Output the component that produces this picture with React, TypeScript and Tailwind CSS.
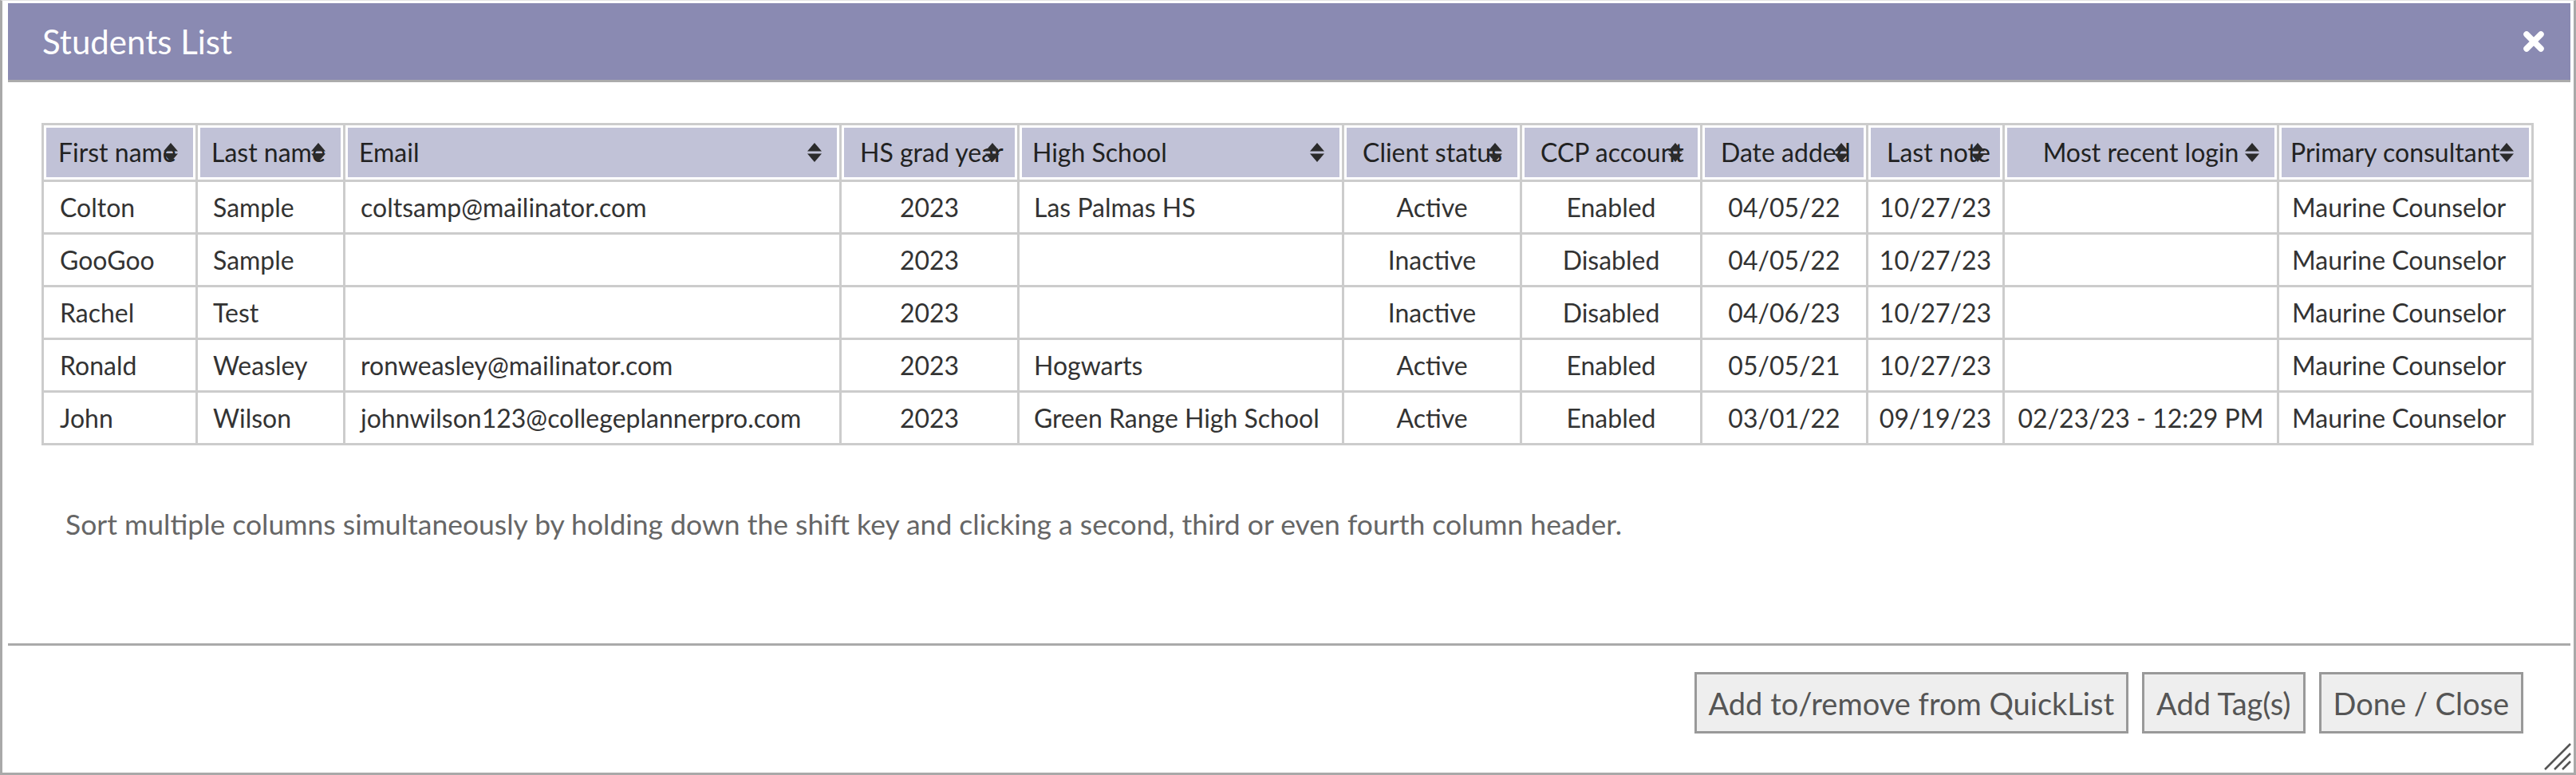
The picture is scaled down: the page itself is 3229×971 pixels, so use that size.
import React from "react";

type Col = { label: string; w: number; center: boolean; pl: number };

const cols: Col[] = [
  { label: "First name", w: 193, center: false, pl: 18 },
  { label: "Last name", w: 185, center: false, pl: 17 },
  { label: "Email", w: 622, center: false, pl: 17 },
  { label: "HS grad year", w: 223, center: true, pl: 0 },
  { label: "High School", w: 407, center: false, pl: 16 },
  { label: "Client status", w: 223, center: true, pl: 0 },
  { label: "CCP account", w: 226, center: true, pl: 0 },
  { label: "Date added", w: 208, center: true, pl: 0 },
  { label: "Last note", w: 171, center: true, pl: 0 },
  { label: "Most recent login", w: 344, center: true, pl: 0 },
  { label: "Primary consultant", w: 319, center: false, pl: 14 },
];

const rows: string[][] = [
  ["Colton", "Sample", "coltsamp@mailinator.com", "2023", "Las Palmas HS", "Active", "Enabled", "04/05/22", "10/27/23", "", "Maurine Counselor"],
  ["GooGoo", "Sample", "", "2023", "", "Inactive", "Disabled", "04/05/22", "10/27/23", "", "Maurine Counselor"],
  ["Rachel", "Test", "", "2023", "", "Inactive", "Disabled", "04/06/23", "10/27/23", "", "Maurine Counselor"],
  ["Ronald", "Weasley", "ronweasley@mailinator.com", "2023", "Hogwarts", "Active", "Enabled", "05/05/21", "10/27/23", "", "Maurine Counselor"],
  ["John", "Wilson", "johnwilson123@collegeplannerpro.com", "2023", "Green Range High School", "Active", "Enabled", "03/01/22", "09/19/23", "02/23/23 - 12:29 PM", "Maurine Counselor"],
];

function SortIcon() {
  return (
    <svg width="20" height="26" viewBox="0 0 20 26" className="block">
      <path d="M10 1 L19 11.5 L1 11.5 Z" fill="#2b2b2b" />
      <path d="M1 14.5 L19 14.5 L10 25 Z" fill="#2b2b2b" />
    </svg>
  );
}

function CloseIcon() {
  return (
    <svg width="30" height="30" viewBox="0 0 30 30" className="block">
      <path d="M6 6 L24 24 M24 6 L6 24" stroke="#ffffff" strokeWidth="7.5" strokeLinecap="round" />
    </svg>
  );
}

function Grip() {
  return (
    <svg width="40" height="40" viewBox="0 0 40 40" className="block">
      <path d="M38 6 L6 38 M38 18 L18 38 M38 28 L28 38" stroke="#555" strokeWidth="2.5" />
    </svg>
  );
}

export default function App() {
  return (
    <div className="relative w-[3229px] h-[971px] bg-white font-['Lato',sans-serif] border-x-[3px] border-b-[3px] border-t border-[#a9a9a9] border-t-[#e4e4e4] pt-[3px] pl-[7px] pr-[4px] flex flex-col">
      <div className="h-[99px] bg-[#8a8ab2] border-b-[3px] border-[#ababab] flex items-center justify-between pl-[43px] pr-[31px] shrink-0">
        <span className="text-[42px] text-white leading-none">Students List</span>
        <CloseIcon />
      </div>

      <div className="pl-[42px] pt-[51px]">
        <table className="table-fixed border-collapse w-[3122px] text-[32px] text-[#333]">
          <colgroup>
            {cols.map((c, i) => (
              <col key={i} style={{ width: c.w }} />
            ))}
          </colgroup>
          <thead>
            <tr>
              {cols.map((c, i) => (
                <th key={i} className="border-[3px] border-[#cccccc] p-[3px] bg-white font-normal">
                  <div
                    className={
                      "relative h-[62px] leading-[62px] bg-[#c1c2d7] overflow-hidden whitespace-nowrap text-[#222] " +
                      (c.center ? "text-center px-[20px]" : "text-left pr-0")
                    }
                    style={c.center ? undefined : { paddingLeft: c.pl - 3 }}
                  >
                    {c.label}
                    <span className="absolute right-[18px] top-1/2 -translate-y-1/2">
                      <SortIcon />
                    </span>
                  </div>
                </th>
              ))}
            </tr>
          </thead>
          <tbody>
            {rows.map((r, ri) => (
              <tr key={ri}>
                {r.map((v, ci) => (
                  <td
                    key={ci}
                    className={
                      "border-[3px] border-[#cccccc] h-[66px] py-0 whitespace-nowrap leading-none " +
                      (cols[ci].center ? "text-center px-0" : "text-left pr-0")
                    }
                    style={cols[ci].center ? undefined : { paddingLeft: cols[ci].pl + 2 }}
                  >
                    {v}
                  </td>
                ))}
              </tr>
            ))}
          </tbody>
        </table>

        <p className="mt-[78px] ml-[30px] text-[35.5px] leading-[42px] text-[#666]">
          Sort multiple columns simultaneously by holding down the shift key and clicking a second, third or even fourth column header.
        </p>
      </div>

      <div className="mt-[128px] h-[3px] bg-[#aaaaaa] shrink-0" />

      <div className="mt-[33px] flex justify-end gap-[17px] pr-[59px]">
        <button className="h-[77px] px-[15px] border-[3px] border-[#999] bg-[#eeeeee] text-[38px] text-[#555] leading-none">
          Add to/remove from QuickList
        </button>
        <button className="h-[77px] px-[15px] border-[3px] border-[#999] bg-[#eeeeee] text-[38px] text-[#555] leading-none">
          Add Tag(s)
        </button>
        <button className="h-[77px] px-[15px] border-[3px] border-[#999] bg-[#eeeeee] text-[38px] text-[#555] leading-none">
          Done / Close
        </button>
      </div>

      <div className="absolute right-[2px] bottom-[2px]">
        <Grip />
      </div>
    </div>
  );
}
